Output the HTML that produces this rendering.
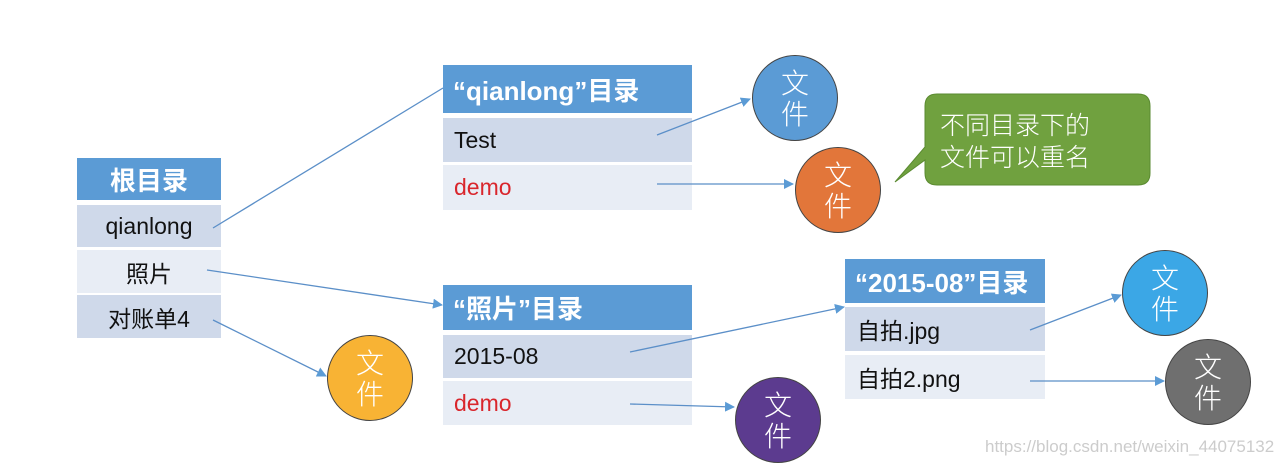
<!DOCTYPE html>
<html><head><meta charset="utf-8"><style>
body{margin:0;width:1284px;height:466px;background:#fff;position:relative;overflow:hidden;font-family:"Liberation Sans","Noto Sans CJK SC",sans-serif}
.c{position:absolute;box-sizing:border-box;font-size:23px;color:#111;display:flex;align-items:center}
.h{background:#5b9bd5;color:#fff;font-weight:bold;font-size:26px}
.o{background:#cfd9ea}.e{background:#e8edf5}
.r{color:#d9262c}
.ci{position:absolute;width:86px;height:86px;border-radius:50%;border:1.5px solid #444;box-sizing:border-box;color:#fff;font-size:28px;line-height:31px;text-align:center;display:flex;flex-direction:column;justify-content:center;font-family:"Noto Sans CJK SC",sans-serif;font-weight:300}
svg{position:absolute;left:0;top:0}
</style></head><body>
<div class="c h" style="left:77px;top:158px;width:144px;height:42px;justify-content:center">根目录</div>
<div class="c o" style="left:77px;top:205px;width:144px;height:42px;justify-content:center">qianlong</div>
<div class="c e" style="left:77px;top:250px;width:144px;height:43px;justify-content:center">照片</div>
<div class="c o" style="left:77px;top:295px;width:144px;height:43px;justify-content:center">对账单4</div>

<div class="c h" style="left:443px;top:65px;width:249px;height:48px;padding-left:10px">“qianlong”目录</div>
<div class="c o" style="left:443px;top:118px;width:249px;height:44px;padding-left:11px">Test</div>
<div class="c e r" style="left:443px;top:165px;width:249px;height:45px;padding-left:11px">demo</div>

<div class="c h" style="left:443px;top:285px;width:249px;height:45px;padding-left:10px">“照片”目录</div>
<div class="c o" style="left:443px;top:335px;width:249px;height:43px;padding-left:11px">2015-08</div>
<div class="c e r" style="left:443px;top:381px;width:249px;height:44px;padding-left:11px">demo</div>

<div class="c h" style="left:845px;top:259px;width:200px;height:44px;padding-left:10px">“2015-08”目录</div>
<div class="c o" style="left:845px;top:307px;width:200px;height:44px;padding-left:12px">自拍.jpg</div>
<div class="c e" style="left:845px;top:355px;width:200px;height:44px;padding-left:12px">自拍2.png</div>

<svg width="1284" height="466">
<defs><marker id="a" markerWidth="10" markerHeight="10" refX="9" refY="5" orient="auto" markerUnits="userSpaceOnUse"><path d="M0,0 L10,5 L0,10 z" fill="#5b9bd5"/></marker></defs>
<g stroke="#5b8fc8" stroke-width="1.3" fill="none">
<line x1="213" y1="228" x2="443" y2="88"/>
<line x1="657" y1="135" x2="750" y2="99" marker-end="url(#a)"/>
<line x1="657" y1="184" x2="793" y2="184" marker-end="url(#a)"/>
<line x1="207" y1="270" x2="442" y2="305" marker-end="url(#a)"/>
<line x1="213" y1="320" x2="326" y2="376" marker-end="url(#a)"/>
<line x1="630" y1="352" x2="844" y2="307" marker-end="url(#a)"/>
<line x1="630" y1="404" x2="734" y2="407" marker-end="url(#a)"/>
<line x1="1030" y1="330" x2="1121" y2="295" marker-end="url(#a)"/>
<line x1="1030" y1="381" x2="1164" y2="381" marker-end="url(#a)"/>
</g>
<path d="M937,94 H1138 Q1150,94 1150,106 V173 Q1150,185 1138,185 H937 Q925,185 925,173 V160 L895,182 L925,147 V106 Q925,94 937,94 Z" fill="#70a13f" stroke="#5a8a30" stroke-width="1"/>
</svg>
<div style="position:absolute;left:940px;top:108px;color:#fff;font-size:25px;line-height:32px;font-family:'Noto Sans CJK SC',sans-serif;font-weight:300">不同目录下的<br>文件可以重名</div>

<div class="ci" style="left:752px;top:55px;background:#5b9bd5">文<br>件</div>
<div class="ci" style="left:795px;top:147px;background:#e2763a">文<br>件</div>
<div class="ci" style="left:327px;top:335px;background:#f8b334">文<br>件</div>
<div class="ci" style="left:735px;top:377px;background:#5c3b8f">文<br>件</div>
<div class="ci" style="left:1122px;top:250px;background:#3ba7e6">文<br>件</div>
<div class="ci" style="left:1165px;top:339px;background:#6f6f6f">文<br>件</div>
<div style="position:absolute;left:985px;top:437px;color:#ccc;font-size:17px">https://blog.csdn.net/weixin_44075132</div>
</body></html>
